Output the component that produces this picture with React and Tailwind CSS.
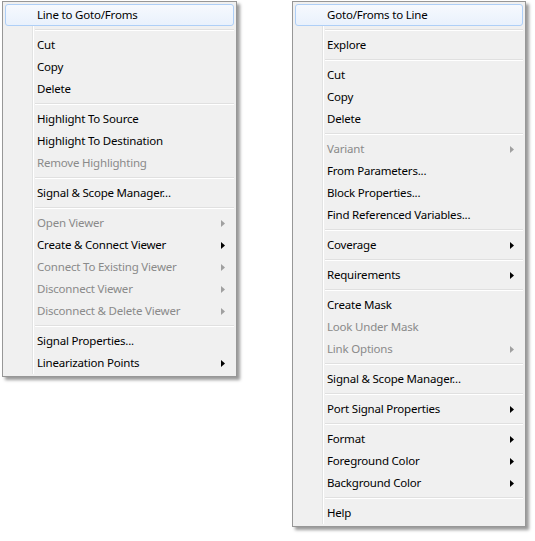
import React from "react";

const LEFT = [
  { t: "Line to Goto/Froms", hl: true },
  "sep",
  { t: "Cut" },
  { t: "Copy" },
  { t: "Delete" },
  "sep",
  { t: "Highlight To Source" },
  { t: "Highlight To Destination" },
  { t: "Remove Highlighting", dis: true },
  "sep",
  { t: "Signal & Scope Manager..." },
  "sep",
  { t: "Open Viewer", dis: true, sub: true },
  { t: "Create & Connect Viewer", sub: true },
  { t: "Connect To Existing Viewer", dis: true, sub: true },
  { t: "Disconnect Viewer", dis: true, sub: true },
  { t: "Disconnect & Delete Viewer", dis: true, sub: true },
  "sep",
  { t: "Signal Properties..." },
  { t: "Linearization Points", sub: true },
];

const RIGHT = [
  { t: "Goto/Froms to Line", hl: true },
  "sep",
  { t: "Explore" },
  "sep",
  { t: "Cut" },
  { t: "Copy" },
  { t: "Delete" },
  "sep",
  { t: "Variant", dis: true, sub: true },
  { t: "From Parameters..." },
  { t: "Block Properties..." },
  { t: "Find Referenced Variables..." },
  "sep",
  { t: "Coverage", sub: true },
  "sep",
  { t: "Requirements", sub: true },
  "sep",
  { t: "Create Mask" },
  { t: "Look Under Mask", dis: true },
  { t: "Link Options", dis: true, sub: true },
  "sep",
  { t: "Signal & Scope Manager..." },
  "sep",
  { t: "Port Signal Properties", sub: true },
  "sep",
  { t: "Format", sub: true },
  { t: "Foreground Color", sub: true },
  { t: "Background Color", sub: true },
  "sep",
  { t: "Help" },
];

function Arrow({ dis }) {
  return (
    <svg width="4" height="7" viewBox="0 0 4 7" className="shrink-0">
      <path d="M0 0 L4 3.5 L0 7 Z" fill={dis ? "#a0a0a0" : "#000000"} />
    </svg>
  );
}

function Item({ it }) {
  if (it === "sep") {
    return (
      <div className="flex h-[8px]">
        <div className="w-[28px] border-r border-[#e2e3e3]" />
        <div className="flex-1 flex flex-col justify-center border-l border-white pl-[1px]">
          <div className="h-[1px] bg-[#e0e0e0]" />
          <div className="h-[1px] bg-white" />
        </div>
      </div>
    );
  }
  if (it.hl) {
    return (
      <div className="flex h-[22px] rounded-[3px] border border-[#aecff7] bg-gradient-to-b from-[#f6f9fe] to-[#e9f1fc]">
        <div className="w-[27px] border-r border-transparent" />
        <div className="flex-1 flex items-center border-l border-transparent pl-[3px] text-black">
          {it.t}
        </div>
      </div>
    );
  }
  return (
    <div className="flex h-[22px]">
      <div className="w-[28px] border-r border-[#e2e3e3]" />
      <div
        className={
          "flex-1 flex items-center border-l border-white pl-[3px] pr-[9px] " +
          (it.dis ? "text-[#8a8a8a]" : "text-black")
        }
      >
        <span className="flex-1">{it.t}</span>
        {it.sub && <Arrow dis={it.dis} />}
      </div>
    </div>
  );
}

function Menu({ items, w }) {
  return (
    <div
      className={
        "border border-[#979797] bg-[#f0f0f0] p-[2px] shadow-[3px_3px_3px_rgba(0,0,0,0.4)] " + w
      }
    >
      {items.map((it, i) => (
        <Item key={i} it={it} />
      ))}
    </div>
  );
}

export default function App() {
  return (
    <div
      className="w-[535px] h-[541px] bg-white flex items-start pl-[2px] pt-[1px] gap-[55px] text-[11.5px] tracking-[-0.2px] leading-none"
      style={{ fontFamily: '"Noto Sans", sans-serif' }}
    >
      <Menu items={LEFT} w="w-[235px]" />
      <Menu items={RIGHT} w="w-[234px]" />
    </div>
  );
}
